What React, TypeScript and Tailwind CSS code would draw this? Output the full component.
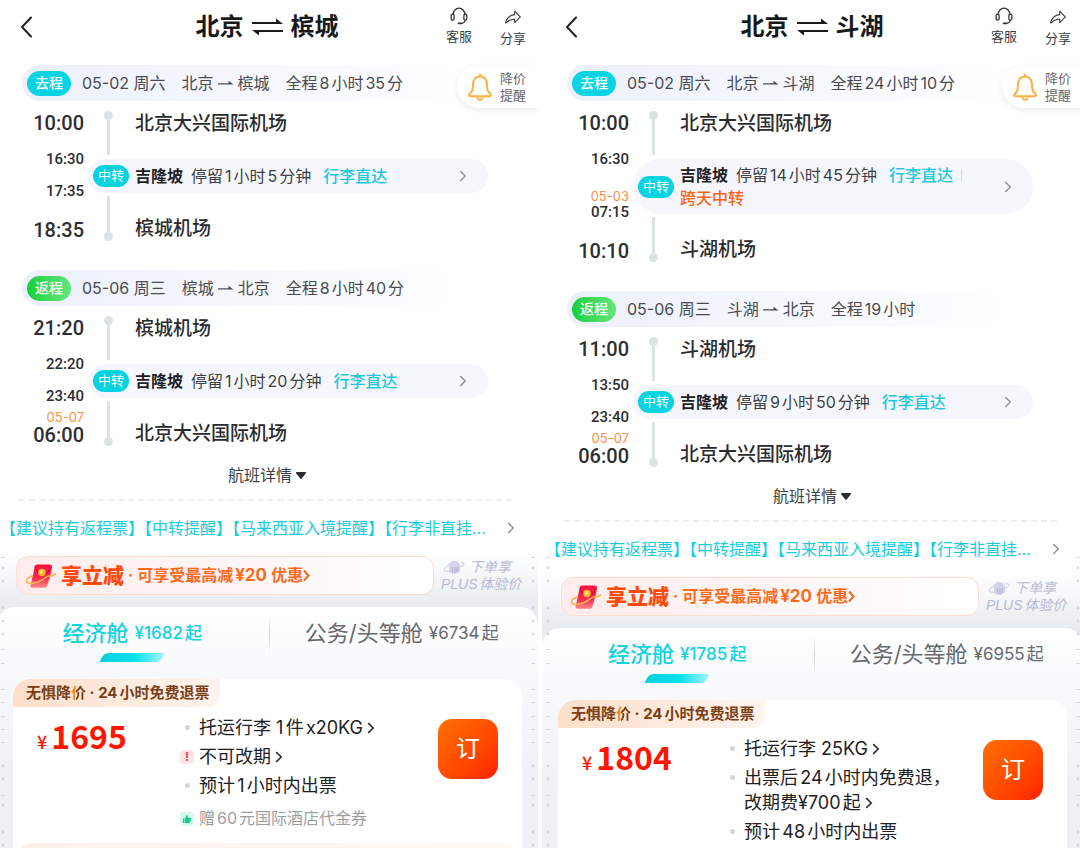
import React from 'react';
import { ChevronRight } from 'lucide-react';
import { PiShareFat } from 'react-icons/pi';

interface Transit {
  city: string;
  arrive: string;
  depart: string;
  departDate?: string;
  stay: string;
  overnight?: string;
}

interface Leg {
  type: 'out' | 'back';
  date: string;
  from: string;
  to: string;
  duration: string;
  start: { time: string; airport: string };
  end: { time: string; date?: string; airport: string };
  transit: Transit;
}

interface Benefit {
  lines: string[];
  icon: 'dot' | 'warn' | 'gift';
  more?: boolean;
}

interface Trip {
  from: string;
  to: string;
  legs: Leg[];
  economy: string;
  business: string;
  price: string;
  benefits: Benefit[];
}

const trips: Trip[] = [
  {
    from: '北京',
    to: '槟城',
    legs: [
      {
        type: 'out',
        date: '05-02 周六',
        from: '北京',
        to: '槟城',
        duration: '全程8小时35分',
        start: { time: '10:00', airport: '北京大兴国际机场' },
        end: { time: '18:35', airport: '槟城机场' },
        transit: { city: '吉隆坡', arrive: '16:30', depart: '17:35', stay: '停留1小时5分钟' },
      },
      {
        type: 'back',
        date: '05-06 周三',
        from: '槟城',
        to: '北京',
        duration: '全程8小时40分',
        start: { time: '21:20', airport: '槟城机场' },
        end: { time: '06:00', date: '05-07', airport: '北京大兴国际机场' },
        transit: { city: '吉隆坡', arrive: '22:20', depart: '23:40', stay: '停留1小时20分钟' },
      },
    ],
    economy: '1682',
    business: '6734',
    price: '1695',
    benefits: [
      { lines: ['托运行李 1件x20KG'], icon: 'dot', more: true },
      { lines: ['不可改期'], icon: 'warn', more: true },
      { lines: ['预计1小时内出票'], icon: 'dot' },
      { lines: ['赠60元国际酒店代金券'], icon: 'gift' },
    ],
  },
  {
    from: '北京',
    to: '斗湖',
    legs: [
      {
        type: 'out',
        date: '05-02 周六',
        from: '北京',
        to: '斗湖',
        duration: '全程24小时10分',
        start: { time: '10:00', airport: '北京大兴国际机场' },
        end: { time: '10:10', airport: '斗湖机场' },
        transit: {
          city: '吉隆坡',
          arrive: '16:30',
          depart: '07:15',
          departDate: '05-03',
          stay: '停留14小时45分钟',
          overnight: '跨天中转',
        },
      },
      {
        type: 'back',
        date: '05-06 周三',
        from: '斗湖',
        to: '北京',
        duration: '全程19小时',
        start: { time: '11:00', airport: '斗湖机场' },
        end: { time: '06:00', date: '05-07', airport: '北京大兴国际机场' },
        transit: { city: '吉隆坡', arrive: '13:50', depart: '23:40', stay: '停留9小时50分钟' },
      },
    ],
    economy: '1785',
    business: '6955',
    price: '1804',
    benefits: [
      { lines: ['托运行李 25KG'], icon: 'dot', more: true },
      { lines: ['出票后24小时内免费退，', '改期费¥700起'], icon: 'dot', more: true },
      { lines: ['预计48小时内出票'], icon: 'dot' },
    ],
  },
];

const HeadsetIcon = () => (
  <svg width="18" height="18" viewBox="0 0 18 18" fill="none" stroke="#333" strokeWidth="1.3" strokeLinecap="round">
    <path d="M3.2 7.2C3.2 3.8 5.8 1.2 9 1.2s5.8 2.6 5.8 6" />
    <rect x="1.2" y="7.2" width="2.9" height="6" rx="1.4" />
    <rect x="13.9" y="7.2" width="2.9" height="6" rx="1.4" />
    <path d="M15.2 13.6c-.6 1.8-2.2 2.7-4.4 2.9" />
    <path d="M8.6 16.4h1.8" strokeWidth="1.9" />
  </svg>
);

const BellIcon = () => (
  <svg width="26" height="28" viewBox="0 0 26 28" fill="none" stroke="#ffae42" strokeWidth="2" strokeLinejoin="round" strokeLinecap="round">
    <path d="M13 3.400c-3.800 0-6.400 2.800-6.800 6.600l-.6 6.200c-.2 2-1 3.400-2.900 4.600-1 .7-.6 2.400.5 2.400h19.600c1.100 0 1.500-1.700.5-2.400-1.900-1.200-2.700-2.600-2.900-4.600l-.6-6.200c-.4-3.800-3-6.600-6.800-6.600Z" />
    <path d="M13 1.600v1.600" />
    <path d="M10.600 25.200c.5 1.200 1.400 1.600 2.400 1.600s1.900-.4 2.400-1.600" />
  </svg>
);

const SwapIcon = () => (
  <svg width="33" height="18" viewBox="0 0 33 18" fill="#1b1b1b">
    <path d="M1 4h24V.6L32 6H1Z" />
    <path d="M32 12H1l7 5.400V14h24Z" />
  </svg>
);

const RouteArrow = () => (
  <svg width="16" height="8" viewBox="0 0 16 8" className="mx-1" fill="#4a4c50">
    <path d="M0 4.200h10.500V1.800l5 3.600H0Z" />
  </svg>
);

const RedPacketIcon = () => (
  <svg width="32" height="28" viewBox="0 0 32 28" fill="none">
    <defs>
      <linearGradient id="packet" x1="0" y1="0" x2="0" y2="1">
        <stop offset="0" stopColor="#f5123f" />
        <stop offset=".6" stopColor="#f72a4f" />
        <stop offset="1" stopColor="#ff8a8a" />
      </linearGradient>
    </defs>
    <path d="M12 2.500h12.700c1.500 0 2.500 1.200 2.300 2.700l-1.400 7.600-3.400 11c-.4 1.200-1.300 2-2.500 2H7.600c-1.500 0-2.400-1.300-2-2.700l1.600-6.600 2.600-12c.3-1.200 1-2 2.200-2Z" fill="url(#packet)" />
    <path d="M10 4.500c1.500 5 4.500 8.500 7.500 8.500s6-2.500 8.500-7.500" stroke="#d90a34" strokeWidth="1.200" />
    <circle cx="17" cy="10.500" r="3.800" fill="#ffb02e" />
    <circle cx="16.200" cy="9.900" r="2" fill="#ffdc73" />
    <path d="M7.500 14C3.500 15.200 1 17.400 1.600 19.400c1 3.200 9.400 2.600 15.400-1.400 3.600-2.400 5.400-4.600 8.400-4.200 1.600.2 3.200-.4 5-1.800" stroke="#ffb24d" strokeWidth="1.600" strokeLinecap="round" />
  </svg>
);

const PlanetIcon = () => (
  <svg width="22" height="15" viewBox="0 0 22 15" fill="none">
    <path d="M5.500 4 9.500.8l5 .7 2.700 3.500v6.500L13 14l-6.500-1Z" fill="#d3d6e8" />
    <path d="m9 7 1 6M12 7v6.500M14.500 6.500 14 12" stroke="#a9aecd" strokeWidth="1" />
    <path d="M5.500 5.500C2.500 7 .6 8.900 1.200 10c.6 1.300 3 1.400 6 1M17.200 7.500c2.700-1.600 4.200-3.300 3.700-4.200-.3-.7-1.600-.7-3.200-.4" stroke="#c3c7de" strokeWidth="1" />
  </svg>
);

// Faint punched marks that run down both edges of the fare area
const MARKS: [number, boolean][] = [
  [7, false], [18, true], [31, true], [58, true], [71, true], [84, true], [99, false], [113, false],
  [139, false], [152, false], [166, false], [179, false], [192, false], [216, true], [229, true],
  [245, false], [255, true], [282, true], [295, true],
];

const EdgeMarks = () => (
  <svg width="6" height="300" viewBox="0 0 6 300" fill="#c9ced4" aria-hidden="true">
    {MARKS.map(([y, dot]) =>
      dot ? <circle key={y} cx="3" cy={y} r="1.4" opacity=".75" /> : <rect key={y} x="1" y={y} width="4" height="1" opacity=".75" />
    )}
  </svg>
);

const TransitBar: React.FC<{ transit: Transit }> = ({ transit }) => (
  <button type="button" className="flex w-full min-h-[34px] items-center rounded-[27px] bg-[#f6f7fc] py-[5px] pl-[5px] pr-5 text-left">
    <span className="flex h-[22px] w-9 shrink-0 items-center justify-center rounded-full bg-[#05d3e0] text-[13px] text-white">中转</span>
    <span className="ml-[6px] flex flex-1 flex-col gap-px leading-[22px]">
      <span className="flex items-center gap-2">
        <b className="font-bold text-[#1f2023]">{transit.city}</b>
        <span className="text-[#3d3f43]">{transit.stay}</span>
        <span className="ml-1 font-medium text-[#1cc8d9]">行李直达</span>
        {transit.overnight && <i className="h-3 w-px bg-[#d5d8de]" />}
      </span>
      {transit.overnight && <span className="font-medium text-[#ff6414]">{transit.overnight}</span>}
    </span>
    <ChevronRight className="-mr-1 h-[18px] w-[18px] text-[#8f9296]" />
  </button>
);

const LegBlock: React.FC<{ leg: Leg }> = ({ leg }) => {
  const { transit, start, end } = leg;
  return (
    <section>
      <div className="ml-[22px] mr-[50px] flex h-9 items-center rounded-full bg-linear-to-r from-[#ecf0fb] via-[#f6f8fd] to-white pl-[5px] text-[#494b50]">
        <span
          className={`flex h-[25px] w-11 items-center justify-center rounded-full text-sm font-medium text-white ${
            leg.type === 'out' ? 'bg-[#0bd4e2]' : 'bg-linear-to-r from-[#0ccf3d] to-[#62e67c]'
          }`}
        >
          {leg.type === 'out' ? '去程' : '返程'}
        </span>
        <span className="ml-[11px]">{leg.date}</span>
        <span className="ml-4 flex items-center">
          {leg.from}
          <RouteArrow />
          {leg.to}
        </span>
        <span className="ml-4">{leg.duration}</span>
      </div>

      <div className="flex">
        <div className="flex w-[84px] flex-col items-end pt-[11px] font-['Roboto',sans-serif] font-medium text-[#2d2e31]">
          <span className="text-xl leading-[22px]">{start.time}</span>
          <span className="mt-[17px] text-[15px] leading-4">{transit.arrive}</span>
          <span className="mt-auto flex flex-col items-end">
            {transit.departDate && <span className="font-['Inter',sans-serif] text-[13px] font-normal leading-4 text-[#ff8d42]">{transit.departDate}</span>}
            <span className="text-[15px] leading-4">{transit.depart}</span>
          </span>
          <span className="mt-2 flex h-[34px] flex-col items-end justify-end">
            {end.date && <span className="font-['Inter',sans-serif] text-[13px] font-normal leading-[14px] text-[#ff8d42]">{end.date}</span>}
            <span className="text-xl leading-[22px]">{end.time}</span>
          </span>
        </div>

        <div className="ml-1 mr-[50px] flex-1">
          <div className="flex h-[58px] pl-4">
            <div className="flex w-[9px] flex-col items-center pb-1 pt-[10px]">
              <i className="h-[9px] w-[9px] rounded-full bg-[#dde3e5]" />
              <i className="w-[3px] flex-1 bg-[#dde3e5]" />
            </div>
            <span className="ml-[22px] mt-[9px] text-[19px] font-medium leading-7 text-[#2a2b2e]">{start.airport}</span>
          </div>
          <TransitBar transit={transit} />
          <div className="flex h-12 items-end pl-4">
            <div className="flex h-full w-[9px] flex-col items-center pt-[3px]">
              <i className="w-[3px] flex-1 bg-[#dde3e5]" />
              <i className="h-[9px] w-[9px] rounded-full bg-[#dde3e5]" />
            </div>
            <span className="ml-[22px] text-[19px] font-medium leading-6 text-[#2a2b2e]">{end.airport}</span>
          </div>
        </div>
      </div>
    </section>
  );
};

const BenefitIcon: React.FC<{ icon: Benefit['icon'] }> = ({ icon }) => {
  if (icon === 'warn') {
    return <span className="flex h-[14px] w-[14px] items-center justify-center rounded bg-[#ffe3e6] text-xs font-bold text-[#fb3d55]">!</span>;
  }
  if (icon === 'gift') {
    return (
      <span className="flex h-[14px] w-[14px] items-center justify-center rounded bg-[#d5f8ea]">
        <svg width="8" height="8" viewBox="0 0 8 8" fill="#0fcf86">
          <path d="M0 3.200h1.500V8H0ZM2 3.200 3.900 0c1 0 1.200.8 1 1.500l-.3 1.200h2.600c.6 0 .9.500.8 1L7.200 7.200c-.1.500-.5.800-1 .8H2Z" />
        </svg>
      </span>
    );
  }
  return <span className="h-[5px] w-[5px] rounded-full bg-[#d3d5d8]" />;
};

const FareCard: React.FC<{ trip: Trip }> = ({ trip }) => (
  <article className="ml-[13px] mr-4 mt-[17px] rounded-[18px] bg-white">
    <div className="flex">
      <div className="flex h-7 items-center rounded-br-xl rounded-tl-[18px] bg-linear-to-r from-[#fddfca] to-[#fff4ee] pl-[13px] pr-[11px] text-[15px] font-bold text-[#7a3f16]">
        无惧降
        <span className="bg-linear-to-r from-[#ff8412] from-35% to-[#7a3f16] to-35% bg-clip-text text-transparent">价</span>
        &nbsp;·&nbsp;24小时免费退票
      </div>
    </div>
    <div className="flex items-start pb-3 pr-6">
      <div className="flex w-[167px] items-baseline pl-6 pt-[10px] font-['Noto_Sans_CJK_SC',sans-serif] font-bold text-[#ff1500]">
        <span className="text-lg font-medium">¥</span>
        <span className="ml-1 text-[32px] leading-9">{trip.price}</span>
      </div>
      <ul className="flex flex-1 flex-col gap-1 pt-2 text-lg leading-[25px]">
        {trip.benefits.map((b) => (
          <li key={b.lines[0]} className={b.icon === 'gift' ? 'mt-1 flex text-base leading-[25px] text-[#9b9ea1]' : 'flex leading-[25px] text-[#1f2023]'}>
            <span className="mr-[5px] flex h-[25px] w-[14px] shrink-0 items-center justify-center">
              <BenefitIcon icon={b.icon} />
            </span>
            <span>
              {b.lines.map((line, i) => (
                <span key={line} className="flex items-center whitespace-nowrap">
                  {line}
                  {b.more && i === b.lines.length - 1 && (
                    <svg width="8" height="12" viewBox="0 0 8 12" className="ml-1" fill="none" stroke="#2a2b2e" strokeWidth="1.600">
                      <path d="m1.200 1.200 5 4.800-5 4.800" />
                    </svg>
                  )}
                </span>
              ))}
            </span>
          </li>
        ))}
      </ul>
      <button type="button" className="mt-3 h-[60px] w-[60px] shrink-0 rounded-[14px] bg-linear-to-br from-[#ff6e00] to-[#ff1a00] text-2xl text-white">
        订
      </button>
    </div>
    <div className="mx-[5px] h-10 rounded-t-xl bg-linear-to-r from-[#fff0e9] to-[#fffaf8]" />
  </article>
);

const TripPanel: React.FC<{ trip: Trip }> = ({ trip }) => (
  <div className="relative flex h-full flex-col">
    <header className="flex h-[54px] shrink-0 items-center pl-2 pr-3">
      <div className="flex flex-1">
        <button type="button" aria-label="返回" className="ml-3">
          <svg width="12" height="22" viewBox="0 0 12 22" fill="none" stroke="#222" strokeWidth="2" strokeLinecap="round">
            <path d="m11 1.500-9 9.500 9 9.500" />
          </svg>
        </button>
      </div>
      <h1 className="flex items-center gap-[7px] text-2xl font-bold text-[#18191b]">
        {trip.from}
        <SwapIcon />
        {trip.to}
      </h1>
      <div className="flex flex-1 items-start justify-end gap-7 text-[13px] leading-[18px] text-[#3c3e42]">
        <button type="button" className="flex flex-col items-center gap-0.5">
          <HeadsetIcon />
          客服
        </button>
        <button type="button" className="flex flex-col items-center gap-0.5 pt-0.5">
          <PiShareFat className="h-[18px] w-[18px]" />
          分享
        </button>
      </div>
    </header>

    <button
      type="button"
      className="absolute right-0 top-[65px] flex h-[43px] items-center gap-[7px] rounded-l-full bg-white pl-[10px] pr-3 text-left text-[13px] leading-[17px] text-[#66686c] shadow-[0_2px_6px_rgba(0,0,0,0.08)]"
    >
      <BellIcon />
      <span>
        降价
        <br />
        提醒
      </span>
    </button>

    <div className="flex flex-col gap-[29px] pt-[11px]">
      {trip.legs.map((leg) => (
        <LegBlock key={leg.type} leg={leg} />
      ))}
    </div>

    <button type="button" className="mr-1 mt-[17px] flex items-center justify-center gap-1 leading-6 text-[#3d3f43]">
      航班详情
      <svg width="10" height="7" viewBox="0 0 10 7" fill="#2a2b2e">
        <path d="M1 0h8c.9 0 1.300 1 .7 1.600L5.700 6.400c-.4.500-1 .5-1.400 0L.3 1.600C-.3 1 .1 0 1 0Z" />
      </svg>
    </button>
    <hr className="ml-[19px] mr-[26px] mt-3 border-t-2 border-dashed border-[#eceeee]" />

    <a href="#notice" className="mt-[15px] flex items-center pr-[18px] leading-6 text-[#16cddb]">
      <span className="flex-1 truncate">【建议持有返程票】【中转提醒】【马来西亚入境提醒】【行李非直挂...</span>
      <ChevronRight className="h-[18px] w-[18px] text-[#8f9296]" />
    </a>

    <div className="-ml-[3px] mt-[11px] flex flex-1 flex-col bg-linear-to-b from-white to-[#e8ecf0] to-[56px]">
      <div className="flex h-[56px] items-center pl-[19px] pt-[5px]">
        <a href="#promo" className="mb-3 flex h-[39px] w-[418px] items-center rounded-xl border border-[#ffdbd0] bg-linear-to-r from-[#ffecec] to-white pl-2 font-bold text-[#ff6a1a]">
          <RedPacketIcon />
          <span className="ml-1 text-[21px] font-black text-[#ff4a0c]">享立减</span>
          <span className="ml-1">
            ·&nbsp;可享受最高减
            <span className="mx-0.5 text-[17px]">¥20</span>
            优惠
          </span>
          <svg width="7" height="13" viewBox="0 0 7 13" fill="none" stroke="#ff6410" strokeWidth="2">
            <path d="m1 1.500 4.500 5-4.500 5" />
          </svg>
        </a>
        <div className="mb-3 ml-[7px] font-['Liberation_Sans','Noto_Sans_CJK_SC',sans-serif] text-sm italic leading-[17px] text-[#b5bad4]">
          <span className="flex items-center gap-1 pl-0.5">
            <PlanetIcon />
            下单享
          </span>
          PLUS体验价
        </div>
      </div>

      <div className="flex flex-1 flex-col rounded-t-[18px] bg-linear-to-b from-white to-[#eff1f6] to-[160px] pl-[3px]">
        <div role="tablist" className="flex h-[55px] pt-[7px]">
          <button role="tab" aria-selected="true" type="button" className="flex flex-1 flex-col items-center pr-1 font-medium text-[#10d2e1]">
            <span className="flex h-[39px] items-center gap-1.5 text-[22px]">
              经济舱
              <span className="text-[17px]">¥{trip.economy}起</span>
            </span>
            <svg width="64" height="9" viewBox="0 0 64 9">
              <defs>
                <linearGradient id="tabline">
                  <stop offset="0" stopColor="#08cfdf" />
                  <stop offset=".55" stopColor="#08e2ec" />
                  <stop offset="1" stopColor="#a5f2f3" />
                </linearGradient>
              </defs>
              <path d="M0 9C1 4 4 0 9 0h55c-1 5-4 9-9 9Z" fill="url(#tabline)" />
            </svg>
          </button>
          <i className="h-10 w-px bg-linear-to-b from-transparent via-[#cfd3d7] to-transparent" />
          <button role="tab" aria-selected="false" type="button" className="flex flex-1 flex-col items-center pr-1 text-[#66696c]">
            <span className="flex h-[39px] items-center gap-1.5 text-[22px]">
              公务/头等舱
              <span className="text-[17px]">¥{trip.business}起</span>
            </span>
          </button>
        </div>
        <FareCard trip={trip} />
      </div>
    </div>

    <div className="pointer-events-none absolute inset-x-0 top-[550px] flex justify-between pr-[2px]">
      <EdgeMarks />
      <EdgeMarks />
    </div>
  </div>
);

export default function App() {
  return (
    <main className="grid h-screen grid-cols-2 gap-1 overflow-hidden bg-white font-['Inter','Noto_Sans_CJK_SC',sans-serif] text-base [text-autospace:normal]">
      {trips.map((trip, idx) => (
        <div key={trip.to} className="overflow-hidden">
          <div className={idx === 1 ? '-mr-[3px] h-full pl-[3px]' : 'h-full'}>
            <TripPanel trip={trip} />
          </div>
        </div>
      ))}
    </main>
  );
}
